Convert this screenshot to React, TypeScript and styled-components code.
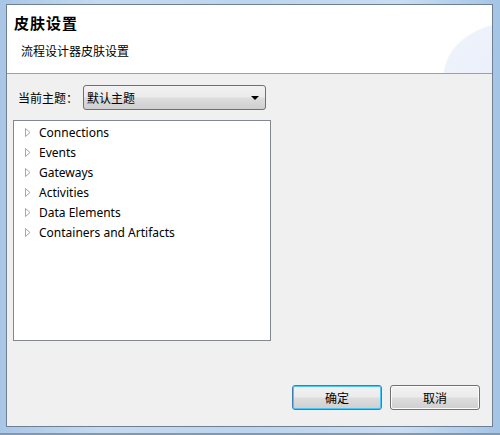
import React from "react";
import styled, { createGlobalStyle } from "styled-components";

const Global = createGlobalStyle`
  html, body { margin: 0; padding: 0; }
  body { width: 500px; height: 435px; overflow: hidden; background: #b9d1ea; }
`;

const Frame = styled.div`
  box-sizing: border-box;
  width: 500px;
  height: 435px;
  padding: 4px 7px 6px 6px;
  background: linear-gradient(90deg, #a9c6e6 0%, #c4daf0 20%, #bcd4ee 50%, #c9ddf2 80%, #a4c4e6 100%);
  border-bottom: 2px solid #8797ab;
  display: flex;
  font-family: "Noto Sans CJK SC", "Noto Sans", sans-serif;
  color: #000;
`;

const Client = styled.div`
  flex: 1;
  display: flex;
  flex-direction: column;
  border: 1px solid #6f7f92;
  background: #f0f0f0;
  overflow: hidden;
`;

const Header = styled.div`
  height: 69px;
  box-sizing: border-box;
  padding: 8px 0 0 7px;
  background:
    radial-gradient(ellipse 120px 90px at 105% 105%, #e9eef9 0%, #eef2fb 60%, rgba(255,255,255,0) 61%),
    radial-gradient(ellipse 90px 140px at 115% 60%, #f1f4fb 0%, #f3f6fc 60%, rgba(255,255,255,0) 61%),
    #ffffff;
  border-bottom: 1px solid #a0a0a0;
  display: flex;
  flex-direction: column;
`;

const Title = styled.div`
  font-size: 15px;
  font-weight: bold;
  letter-spacing: 1px;
  line-height: 20px;
`;

const Subtitle = styled.div`
  font-size: 12px;
  line-height: 16px;
  margin: 10px 0 0 7px;
`;

const Body = styled.div`
  flex: 1;
  display: flex;
  flex-direction: column;
  padding: 11px 0 0 6px;
`;

const ThemeRow = styled.div`
  display: flex;
  align-items: center;
  gap: 5px;
  padding-left: 5px;
`;

const Label = styled.span`
  font-size: 12px;
  width: 60px;
`;

const Combo = styled.div`
  box-sizing: border-box;
  width: 183px;
  height: 25px;
  border: 1px solid #707070;
  border-radius: 3px;
  background: linear-gradient(#f2f2f2 0%, #ebebeb 48%, #dddddd 52%, #cfcfcf 100%);
  display: flex;
  align-items: center;
  justify-content: space-between;
  padding: 0 6px 0 3px;
  font-size: 12px;
`;

const Arrow = styled.span`
  width: 0;
  height: 0;
  border-left: 4px solid transparent;
  border-right: 4px solid transparent;
  border-top: 4px solid #000;
`;

const Tree = styled.div`
  box-sizing: border-box;
  width: 258px;
  height: 221px;
  margin-top: 10px;
  background: #fff;
  border: 1px solid #828790;
  padding: 1px 0 0 11px;
  display: flex;
  flex-direction: column;
`;

const Item = styled.div`
  display: flex;
  align-items: center;
  height: 20px;
  font-family: "Noto Sans", sans-serif;
  font-size: 12px;
  gap: 8px;
`;

const Expander = styled.svg`
  width: 6px;
  height: 9px;
  flex: none;
`;

const Footer = styled.div`
  margin-top: auto;
  display: flex;
  justify-content: flex-end;
  gap: 8px;
  padding: 0 12px 16px 0;
`;

const Button = styled.button<{ $default?: boolean }>`
  box-sizing: border-box;
  width: 90px;
  height: 25px;
  border-radius: 3px;
  border: 1px solid ${(p) => (p.$default ? "#3c7fb1" : "#707070")};
  box-shadow: ${(p) => (p.$default ? "inset 0 0 0 1px #48c8f8" : "inset 0 0 0 1px #fcfcfc")};
  background: linear-gradient(#f2f2f2 0%, #ebebeb 48%, #dddddd 52%, #cfcfcf 100%);
  font-family: "Noto Sans CJK SC", sans-serif;
  font-size: 12px;
  color: #000;
  padding: 0;
`;

const items = ["Connections", "Events", "Gateways", "Activities", "Data Elements", "Containers and Artifacts"];

export default function App() {
  return (
    <>
      <Global />
      <Frame>
        <Client>
          <Header>
            <Title>皮肤设置</Title>
            <Subtitle>流程设计器皮肤设置</Subtitle>
          </Header>
          <Body>
            <ThemeRow>
              <Label>当前主题：</Label>
              <Combo>
                <span>默认主题</span>
                <Arrow />
              </Combo>
            </ThemeRow>
            <Tree>
              {items.map((t) => (
                <Item key={t}>
                  <Expander viewBox="0 0 6 9">
                    <path d="M0.5 0.5 L5 4.5 L0.5 8.5 Z" fill="none" stroke="#a6a6a6" strokeWidth="1" />
                  </Expander>
                  <span>{t}</span>
                </Item>
              ))}
            </Tree>
            <Footer>
              <Button $default>确定</Button>
              <Button>取消</Button>
            </Footer>
          </Body>
        </Client>
      </Frame>
    </>
  );
}
